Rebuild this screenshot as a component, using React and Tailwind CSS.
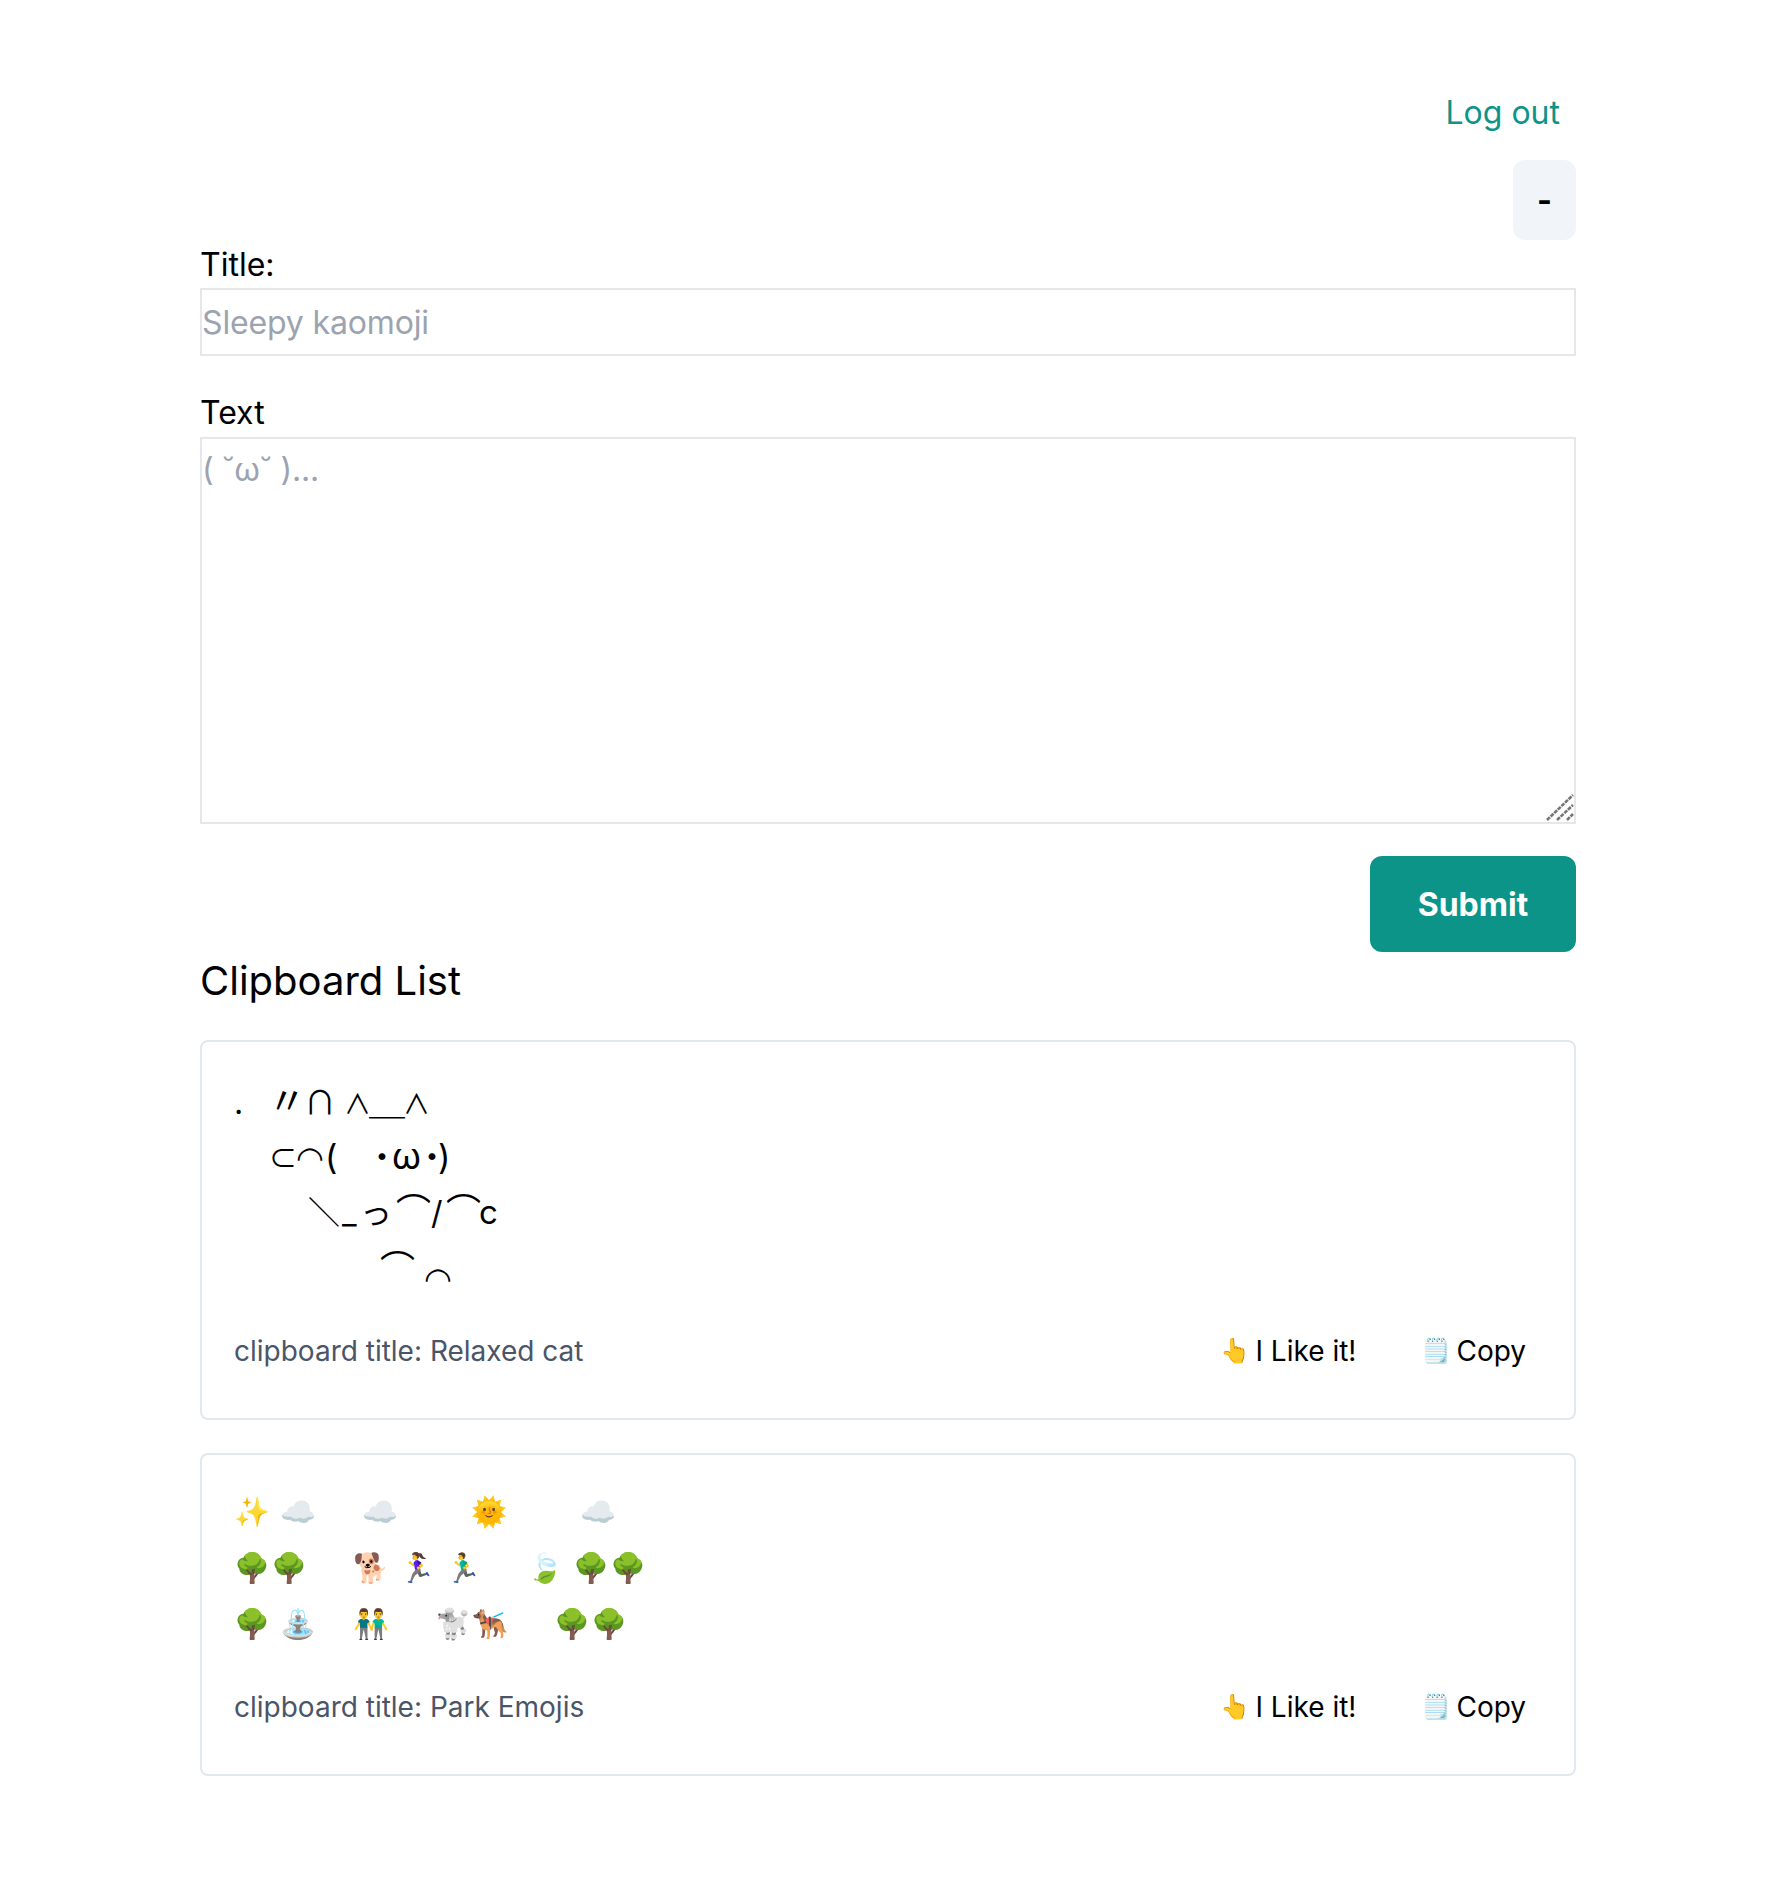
const INTER = '"Inter","Noto Sans CJK JP",sans-serif';

function Actions() {
  return (
    <div className="flex items-center">
      <button className="flex items-center text-black">
        <span className="w-[35px] text-[24px] leading-[48px] text-left">👆</span>
        <span>I Like it!</span>
      </button>
      <button className="ml-[65px] mr-[16px] flex items-center text-black">
        <span className="w-[35px] text-[24px] leading-[48px] text-left">🗒️</span>
        <span>Copy</span>
      </button>
    </div>
  );
}

function Footer({ title, cls }) {
  return (
    <div className={`flex items-center justify-between text-[28px] leading-[48px] ${cls}`}>
      <span className="text-[#4a5568]">clipboard title: {title}</span>
      <Actions />
    </div>
  );
}

function Cat() {
  return (
    <div className="h-[212px] overflow-hidden text-[32px] leading-[56px] text-black">
      <div className="h-[56px] whitespace-nowrap">
        <span className="inline-block w-[34px] leading-[56px]">.</span>
        <span className="inline-block w-[36px] leading-[56px] text-[38px] font-['Noto_Sans_CJK_JP']">〃</span>
        <span className="inline-block w-[40px] leading-[56px] font-['Noto_Sans_CJK_JP']">∩</span>
        <span className="inline-block w-[25px] leading-[56px] text-[27px] font-['Noto_Sans_CJK_JP']">∧</span>
        <span className="inline-block w-[34px] leading-[56px] text-[36px] font-['Noto_Sans_CJK_JP']">＿</span>
        <span className="inline-block leading-[56px] text-[27px] font-['Noto_Sans_CJK_JP']">∧</span>
      </div>
      <div className="h-[56px] whitespace-nowrap pt-[1px]">
        <span className="inline-block w-[35px]">&nbsp;</span>
        <span className="inline-block w-[27px] leading-[56px] text-[28px] font-['Noto_Sans_CJK_JP']">⊂</span>
        <span className="inline-block w-[29px] leading-[56px] font-['Noto_Sans_CJK_JP']">◠</span>
        <span className="inline-block w-[41px] leading-[56px] text-[34px]">(</span>
        <span className="inline-block w-[26px] leading-[56px] font-['Noto_Sans_CJK_JP']">・</span>
        <span className="inline-block w-[24px] leading-[56px] text-[36px]">ω</span>
        <span className="inline-block w-[22px] leading-[56px] font-['Noto_Sans_CJK_JP']">・</span>
        <span className="inline-block leading-[56px] text-[34px]">)</span>
      </div>
      <div className="h-[56px] -translate-y-[1px] whitespace-nowrap">
        <span className="inline-block w-[74px]">&nbsp;</span>
        <span className="inline-block w-[34px] leading-[56px] font-['Noto_Sans_CJK_JP']">＼</span>
        <span className="inline-block w-[18px] leading-[56px]">_</span>
        <span className="inline-block w-[36px] leading-[56px] font-['Noto_Sans_CJK_JP']">っ</span>
        <span className="inline-block w-[35px] leading-[56px] text-[35px] font-['Noto_Sans_CJK_JP']">⌒</span>
        <span className="inline-block w-[15px] leading-[56px]">/</span>
        <span className="inline-block w-[33px] leading-[56px] text-[35px] font-['Noto_Sans_CJK_JP']">⌒</span>
        <span className="inline-block leading-[56px] text-[33px]">c</span>
      </div>
      <div className="h-[56px] whitespace-nowrap">
        <span className="inline-block w-[146px]">&nbsp;</span>
        <span className="inline-block w-[44px] leading-[56px] text-[35px] font-['Noto_Sans_CJK_JP']">⌒</span>
        <span className="inline-block translate-y-[9px] leading-[56px] font-['Noto_Sans_CJK_JP']">◠</span>
      </div>
    </div>
  );
}

const parkLines = [
  '✨ ☁️     ☁️        🌞        ☁️',
  '🌳🌳     🐕 🏃‍♀️ 🏃‍♂️     🍃 🌳🌳',
  '🌳 ⛲    👬     🐩🐕‍🦺     🌳🌳',
];

function Park() {
  const seg = new Intl.Segmenter();
  return (
    <div className="text-[32px] leading-[56px] text-black">
      {parkLines.map((l, i) => (
        <div key={i} className="h-[56px] whitespace-pre">
          {[...seg.segment(l)].map((s, j) =>
            s.segment === ' ' ? (
              <span key={j}> </span>
            ) : (
              <span key={j} className="inline-block w-[37px] text-[29px] leading-[56px]">{s.segment}</span>
            )
          )}
        </div>
      ))}
    </div>
  );
}

export default function App() {
  return (
    <div className="min-h-[1888px] bg-white px-[200px] pt-[89px]" style={{ fontFamily: INTER }}>
      <div className="flex justify-end pr-[16px]">
        <a className="text-[32px] leading-[48px] text-[#0d9488]">Log out</a>
      </div>
      <div className="mt-[23px] flex justify-end">
        <button className="h-[80px] w-[63px] rounded-xl bg-[#f1f5f9] pt-[2px] text-[32px] font-bold text-black">-</button>
      </div>
      <label className="block h-[48px] text-[32px] leading-[50px] text-black">Title:</label>
      <input readOnly placeholder="Sleepy kaomoji" className="block h-[68px] w-full border-2 border-[#e5e7eb] text-[32px] tracking-[-0.15px] placeholder:text-[#9ca3af]" />
      <label className="mt-[33px] block text-[32px] leading-[48px] text-black">Text</label>
      <div className="relative">
        <textarea readOnly placeholder="( ˘ω˘ )..." className="block h-[387px] w-full resize-none border-2 border-[#e5e7eb] pt-[3px] text-[32px] leading-[56px] tracking-[-0.2px] placeholder:text-[#9ca3af]" />
        <svg className="absolute bottom-[2px] right-[2px]" width="28" height="28" viewBox="0 0 28 28" fill="none" stroke="#757575" strokeWidth="2.6" strokeDasharray="4 1">
          <path d="M1 26L27 1" />
          <path d="M11 26L27 11" />
          <path d="M21 26L27 20" />
        </svg>
      </div>
      <div className="mt-[32px] flex justify-end">
        <button className="h-[96px] w-[206px] rounded-xl bg-[#0d9488] pt-[1px] text-[32px] font-bold text-white">Submit</button>
      </div>
      <h2 className="h-[56px] text-[40px] leading-[58px] text-black">Clipboard List</h2>
      <div className="mt-[32px] flex flex-col gap-[33px]">
        <div className="rounded-lg border-2 border-[#e2e8f0] px-[32px] pt-[28px] pb-[43px]">
          <Cat />
          <Footer title="Relaxed cat" cls="mt-[45px]" />
        </div>
        <div className="rounded-lg border-2 border-[#e2e8f0] px-[32px] pt-[28px] pb-[43px]">
          <Park />
          <Footer title="Park Emojis" cls="mt-[32px]" />
        </div>
      </div>
    </div>
  );
}
